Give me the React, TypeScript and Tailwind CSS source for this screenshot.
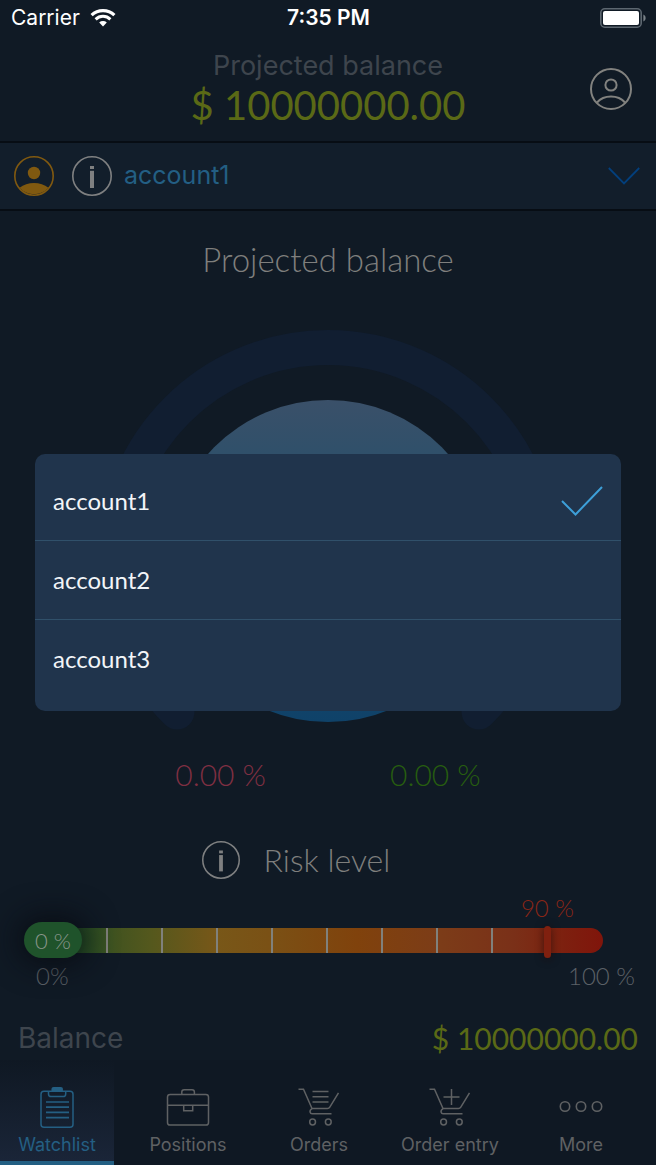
import React, { useState } from "react";

const accounts = ["account1", "account2", "account3"];

function WifiIcon() {
  return (
    <svg width="26" height="18" viewBox="0 0 26 18" fill="none" aria-hidden="true">
      <path d="M1.6 6.2a16.5 16.5 0 0 1 22.8 0" stroke="#fff" strokeWidth="3.2" />
      <path d="M5.6 10.3a10.8 10.8 0 0 1 14.8 0" stroke="#fff" strokeWidth="3" />
      <path d="M9.2 13.6a5.6 5.6 0 0 1 7.6 0L13 17.4z" fill="#fff" />
    </svg>
  );
}

function BatteryIcon() {
  return (
    <svg width="46" height="20" viewBox="0 0 46 20" fill="none" aria-hidden="true">
      <rect x="0.8" y="0.8" width="40.4" height="18.4" rx="4" stroke="#5d6770" strokeWidth="1.6" />
      <rect x="3" y="3" width="36" height="14" rx="2" fill="#fff" />
      <path d="M43.4 6.5c1.7.8 2.2 2 2.2 3.5s-.5 2.7-2.2 3.5z" fill="#7b8389" />
    </svg>
  );
}

function ProfileIcon() {
  return (
    <svg width="42" height="42" viewBox="0 0 42 42" fill="none" stroke="#82827f" strokeWidth="2" aria-hidden="true">
      <circle cx="21" cy="21" r="20" />
      <circle cx="21" cy="17" r="5.6" />
      <path d="M7 34.5C10.5 30.5 15.5 28.6 21 28.6s10.5 1.9 14 5.9" />
    </svg>
  );
}

function HolderIcon() {
  return (
    <svg width="40" height="40" viewBox="0 0 40 40" fill="none" aria-hidden="true">
      <circle cx="20" cy="20" r="19.2" stroke="#805910" strokeWidth="1.6" />
      <circle cx="20" cy="17" r="6.2" fill="#805910" />
      <path d="M5.6 31.8C9.5 28.6 14.5 27 20 27s10.500 1.6 14.4 4.8A19.2 19.2 0 0 1 5.6 31.8z" fill="#805910" />
    </svg>
  );
}

function InfoIcon({ className }: { className: string }) {
  return (
    <svg className={className} viewBox="0 0 40 40" fill="none" aria-hidden="true">
      <circle cx="20" cy="20" r="19.2" stroke="#7f8081" strokeWidth="1.6" />
      <path d="M20 14.8V32" stroke="#7f8081" strokeWidth="4" />
      <path d="M20 10v3" stroke="#7f8081" strokeWidth="4" />
    </svg>
  );
}

function ClipboardIcon() {
  return (
    <svg width="44" height="44" viewBox="0 0 44 44" fill="none" stroke="#245f83" strokeWidth="1.5" aria-hidden="true">
      <rect x="6" y="5.2" width="32" height="36" rx="3" />
      <path d="M13.5 5.5v2.500c0 1.800 1 2.600 2.600 2.600h12c1.600 0 2.600-.8 2.600-2.600V5.5" />
      <path d="M16.5 5.8V3.200c0-1.400.7-2.200 2.200-2.200h7c1.500 0 2.200.8 2.200 2.200v2.600z" fill="#245f83" stroke="none" />
      <path d="M11 16h23M11 21.200h23M11 26.400h23M11 31.600h23" strokeWidth="1.7" />
    </svg>
  );
}

function BriefcaseIcon() {
  return (
    <svg width="44" height="44" viewBox="0 0 44 44" fill="none" stroke="#5f6163" strokeWidth="1.5" aria-hidden="true">
      <rect x="1.5" y="8.5" width="41" height="30.5" rx="2.6" />
      <path d="M15.8 8.5V6c0-1.500.9-2.300 2.300-2.300h8c1.400 0 2.300.8 2.300 2.300v2.500" />
      <path d="M1.5 19.3h41M17.7 19.3v5.500h9v-5.500" />
    </svg>
  );
}

function CartIcon({ plus = false }: { plus?: boolean }) {
  return (
    <svg width="44" height="44" viewBox="0 0 44 44" fill="none" stroke="#5f6163" strokeWidth="1.5" aria-hidden="true">
      <path d="M1.5 3.3h5L15 22.6h15.500c1 0 1.700-.4 2.300-1.400L41.500 6.800" />
      <path d="M15 22.600c-1.800 1.200-2.200 2.500-1.900 3.600.2 1 .9 1.600 2 1.600h19.400" />
      <circle cx="15.600" cy="36" r="2.900" />
      <circle cx="31.300" cy="36" r="2.900" />
      {plus ? <path d="M23.500 3v16M15.500 11h16" /> : <path d="M15.500 5.400h16M15.500 10.700h16M15.500 16h16" />}
    </svg>
  );
}

function MoreIcon() {
  return (
    <svg width="44" height="44" viewBox="0 0 44 44" fill="none" stroke="#5f6163" strokeWidth="1.6" aria-hidden="true">
      <circle cx="6" cy="20.5" r="4.7" />
      <circle cx="22" cy="20.5" r="4.7" />
      <circle cx="38" cy="20.5" r="4.7" />
    </svg>
  );
}

const tabs = [
  { label: "Watchlist", icon: <ClipboardIcon /> },
  { label: "Positions", icon: <BriefcaseIcon /> },
  { label: "Orders", icon: <CartIcon /> },
  { label: "Order entry", icon: <CartIcon plus /> },
  { label: "More", icon: <MoreIcon /> },
];

function BalanceGauge() {
  return (
    <svg width="462" height="402" viewBox="0 0 462 402" fill="none" aria-hidden="true">
      <defs>
        <linearGradient id="disc" x1="0" y1="0" x2="0" y2="1">
          <stop offset="0" stopColor="#3a5069" />
          <stop offset="0.16" stopColor="#30506a" />
          <stop offset="1" stopColor="#0f4269" />
        </linearGradient>
      </defs>
      <path
        d="M80 382A213.5 213.5 0 1 1 382 382"
        stroke="#111e31"
        strokeWidth="35"
        strokeLinecap="round"
      />
      <circle cx="231" cy="231" r="161" fill="url(#disc)" />
    </svg>
  );
}

function RiskBar() {
  return (
    <div
      role="meter"
      aria-label="Risk level"
      aria-valuemin={0}
      aria-valuemax={100}
      aria-valuenow={0}
      className="relative ml-6 mr-[53px] flex h-9 items-center"
    >
      <div className="ml-5 flex h-[25px] flex-1 overflow-hidden rounded-r-full bg-[linear-gradient(90deg,#1f4f27_5%,#46541f_14%,#54581d_19%,#785718_31%,#7a5115_40%,#80420c_56%,#7c3c18_71%,#7a3018_84%,#7d200f_93%,#80150b_100%)]">
        <div className="w-16 border-r-2 border-[#80817c]" />
        <div className="flex-1 border-r-2 border-[#80817c]" />
        <div className="flex-1 border-r-2 border-[#80817c]" />
        <div className="flex-1 border-r-2 border-[#80817c]" />
        <div className="flex-1 border-r-2 border-[#80817c]" />
        <div className="flex-1 border-r-2 border-[#80817c]" />
        <div className="flex-1 border-r-2 border-[#80817c]" />
        <div className="flex-1 border-r-2 border-[#80817c]" />
        <div className="w-[110px]" />
      </div>
      <div className="absolute left-0 top-0 flex h-9 w-[58px] items-center justify-center rounded-full bg-[#1f532b] text-[22px] font-light text-[#8a968c] shadow-[0_0_30px_6px_rgba(8,10,16,0.8)]">
        0 %
      </div>
      <div className="absolute right-[52px] top-1 h-8 w-[7px] rounded-full bg-[#80200f] shadow-[0_1px_8px_rgba(30,10,8,0.7)]" />
    </div>
  );
}

export default function App() {
  const [selected, setSelected] = useState("account1");

  return (
    <div className="relative flex min-h-screen flex-col bg-[#101a25] font-['Inter',sans-serif]">
      <div className="grid h-9 grid-cols-3 items-center pl-[11px] pr-[10px] text-[21px] text-white">
        <div className="flex items-center gap-[10px]">
          <span>Carrier</span>
          <WifiIcon />
        </div>
        <div className="text-center font-semibold">7:35 PM</div>
        <div className="flex justify-end">
          <BatteryIcon />
        </div>
      </div>

      <header className="grid h-[105px] grid-cols-[1fr_auto_1fr] items-center px-6">
        <div className="col-start-2 flex h-full flex-col items-center pt-3">
          <div className="text-[27px] leading-9 text-[#3e454d]">Projected balance</div>
          <div className="font-['Lato',sans-serif] text-[40px] leading-[42px] text-[#5a6916]">$ 10000000.00</div>
        </div>
        <button type="button" aria-label="Profile" className="justify-self-end">
          <ProfileIcon />
        </button>
      </header>

      <div className="flex h-[70px] items-center border-y-2 border-[#070d14] bg-[#121e2b] pl-[14px] pr-4">
        <HolderIcon />
        <button type="button" aria-label="Account information" className="ml-[18px]">
          <InfoIcon className="size-10" />
        </button>
        <button
          type="button"
          aria-haspopup="listbox"
          className="ml-3 flex flex-1 items-center justify-between text-[25px] text-[#235f84]"
        >
          <span>{selected}</span>
          <svg width="32" height="18" viewBox="0 0 32 18" fill="none" stroke="#033f7c" strokeWidth="1.8" aria-hidden="true">
            <path d="M.8 1 16 16.5 31.2 1" />
          </svg>
        </button>
      </div>

      <main className="flex flex-1 flex-col font-['Lato',sans-serif]">
        <h1 className="mt-[26px] text-center text-[33px] font-light leading-[44px] text-[#7f7f7d]">Projected balance</h1>
        <div className="mt-[49px] flex justify-center">
          <BalanceGauge />
        </div>
        <div className="mt-[22px] flex justify-center gap-[124px] text-[30px] font-light leading-10">
          <span className="text-[#7f2f42]">0.00 %</span>
          <span className="text-[#275e0f]">0.00 %</span>
        </div>
        <div className="mr-16 mt-11 flex items-center justify-center gap-6">
          <button type="button" aria-label="Risk level information">
            <InfoIcon className="size-[38px]" />
          </button>
          <h2 className="text-[32px] font-light leading-[44px] text-[#7f7f7d]">Risk level</h2>
        </div>
        <div className="mr-[82px] mt-3 text-right text-2xl font-light leading-7 text-[#8a2617]">90 %</div>
        <RiskBar />
        <div className="mt-0.5 flex justify-between pl-9 pr-[21px] text-2xl font-light leading-8 text-[#5c6167]">
          <span>0%</span>
          <span>100 %</span>
        </div>
        <div className="mt-[26px] flex justify-between px-[18px] text-[30px] leading-10">
          <span className="font-['Inter',sans-serif] text-[28px] text-[#3e454d]">Balance</span>
          <span className="text-[#5a6916]">$ 10000000.00</span>
        </div>
      </main>

      <nav className="flex h-[105px] gap-[17px] bg-[#0f1823] pr-[18px]">
        {tabs.map((tab, i) => (
          <a
            key={tab.label}
            href="#"
            aria-current={i === 0 ? "page" : undefined}
            className={
              i === 0
                ? "flex flex-1 flex-col items-center whitespace-nowrap border-b-4 border-[#235f83] bg-linear-to-b from-[#0f1823] to-[#1a2538] pt-[26px] text-lg text-[#245f83]"
                : "flex flex-1 flex-col items-center whitespace-nowrap border-b-4 border-transparent pt-[26px] text-lg text-[#5f6163]"
            }
          >
            {tab.icon}
            <span className="leading-[30px]">{tab.label}</span>
          </a>
        ))}
      </nav>

      <div className="absolute inset-0 flex items-center px-[35px]">
        <div
          role="listbox"
          aria-label="Accounts"
          className="flex w-full flex-col overflow-hidden rounded-[10px] bg-[#20344c] pb-[13px] pt-2 font-['Lato',sans-serif]"
        >
          {accounts.map((name, i) => (
            <button
              key={name}
              type="button"
              role="option"
              aria-selected={name === selected}
              onClick={() => setSelected(name)}
              className={
                i < accounts.length - 1
                  ? "flex h-[79px] items-center justify-between border-b border-[#30506a] px-[18px] text-2xl text-[#f2f5f8]"
                  : "flex h-[78px] items-center justify-between px-[18px] text-2xl text-[#f2f5f8]"
              }
            >
              <span>{name}</span>
              {name === selected && (
                <svg width="42" height="30" viewBox="0 0 42 30" fill="none" stroke="#3d9fd8" strokeWidth="2" aria-hidden="true">
                  <path d="M1 15 14.500 28.500 41 1" />
                </svg>
              )}
            </button>
          ))}
        </div>
      </div>
    </div>
  );
}
